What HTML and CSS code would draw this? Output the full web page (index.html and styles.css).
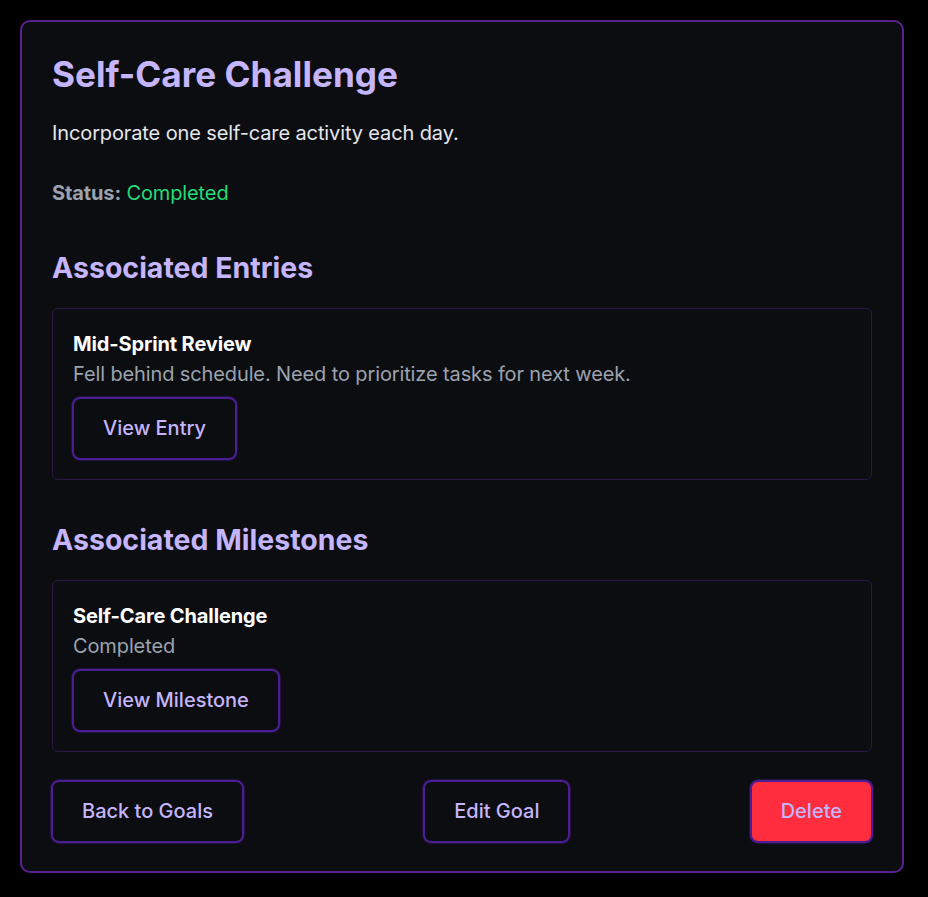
FILE: index.html
```html
<!DOCTYPE html>
<html lang="en">
<head>
<meta charset="utf-8">
<title>Self-Care Challenge</title>
<link rel="stylesheet" href="styles.css">
</head>
<body>
<main class="goal-card">
  <h1 class="goal-title">Self-Care Challenge</h1>
  <p class="goal-desc">Incorporate one self-care activity each day.</p>
  <p class="goal-status"><span class="status-label">Status:</span> <span class="status-value">Completed</span></p>

  <h2 class="section-title">Associated Entries</h2>
  <div class="item-card">
    <div class="item-title">Mid-Sprint Review</div>
    <div class="item-text">Fell behind schedule. Need to prioritize tasks for next week.</div>
    <button class="btn item-btn">View Entry</button>
  </div>

  <h2 class="section-title">Associated Milestones</h2>
  <div class="item-card">
    <div class="item-title">Self-Care Challenge</div>
    <div class="item-text">Completed</div>
    <button class="btn item-btn">View Milestone</button>
  </div>

  <div class="actions">
    <button class="btn">Back to Goals</button>
    <button class="btn">Edit Goal</button>
    <button class="btn btn-danger">Delete</button>
  </div>
</main>
</body>
</html>
```

FILE: styles.css
```css
* { box-sizing: border-box; }
html, body { margin: 0; padding: 0; background: #000; }
body {
  padding: 20px 24px 24px 20px;
  font-family: Inter, "Noto Sans", sans-serif;
  color: #e5e7eb;
}
.goal-card {
  background: #0c0d11;
  border: 2px solid #5b2191;
  border-radius: 10px;
  padding: 30px 30px 28px;
}
.goal-title {
  margin: 0;
  font-size: 35.2px;
  line-height: 44px;
  font-weight: 700;
  color: #c4b5fd;
}
.goal-desc {
  margin: 22px 0 0;
  font-size: 20px;
  line-height: 30px;
  letter-spacing: -0.12px;
  color: #e5e7eb;
}
.goal-status {
  margin: 30px 0 0;
  font-size: 20px;
  line-height: 30px;
  letter-spacing: -0.12px;
}
.status-label { font-weight: 700; color: #9ca3af; }
.status-value { color: #22dd77; }
.section-title {
  margin: 42px 0 0;
  font-size: 28.5px;
  line-height: 36px;
  font-weight: 700;
  color: #c4b5fd;
}
.item-card {
  margin-top: 22px;
  border: 1px solid #2a1845;
  border-radius: 6px;
  padding: 20px 20px 19px;
  display: flex;
  flex-direction: column;
  align-items: flex-start;
}
.item-title {
  font-size: 20px;
  line-height: 30px;
  letter-spacing: -0.12px;
  font-weight: 700;
  color: #ffffff;
}
.item-text {
  font-size: 20px;
  line-height: 30px;
  letter-spacing: -0.12px;
  color: #9ca3af;
}
.btn {
  font-family: Inter, "Noto Sans", sans-serif;
  font-size: 20px;
  font-weight: 500;
  line-height: 27px;
  color: #c4b5fd;
  background: transparent;
  border: 2px solid #4c1d95;
  border-radius: 8px;
  padding: 16px 29px;
  box-shadow: 0 0 0 1px rgba(76, 29, 149, 0.35);
  cursor: pointer;
}
.item-btn {
  margin-top: 8px;
  margin-left: -1px;
}
.actions {
  margin-top: 28px;
  display: flex;
  justify-content: space-between;
  margin-left: -1px;
  margin-right: -1px;
}
.btn-danger {
  background: #ff2d3d;
}
```
